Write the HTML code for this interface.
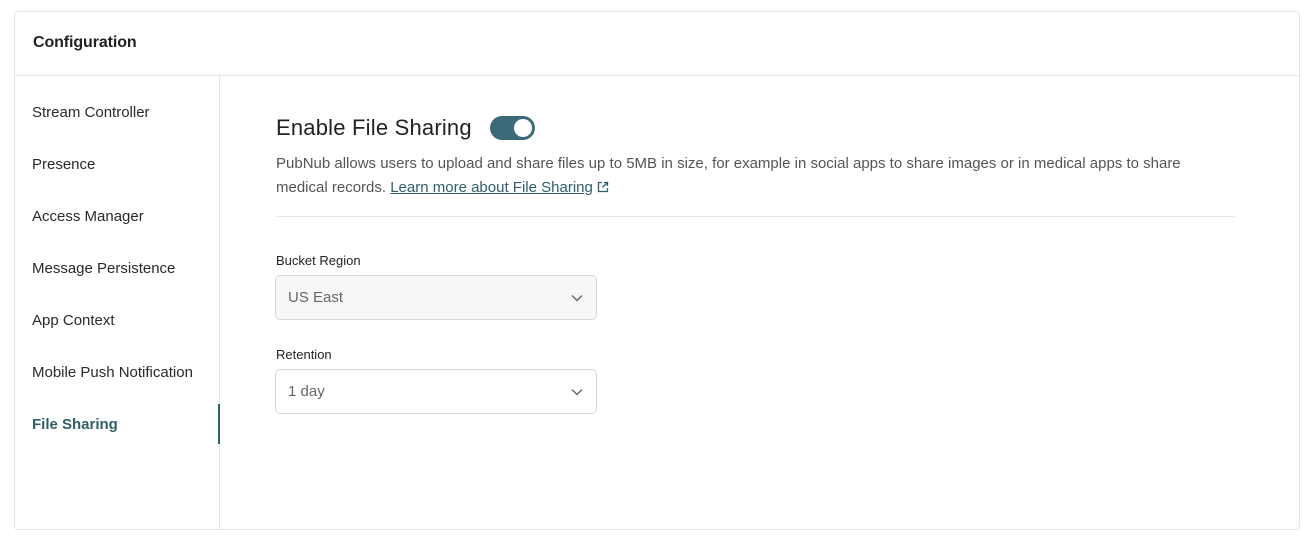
<!DOCTYPE html>
<html><head><style>
*{box-sizing:border-box;margin:0;padding:0}
body{width:1316px;height:544px;background:#fff;font-family:"Liberation Sans",sans-serif;color:#222;position:relative;overflow:hidden}
.card{position:absolute;left:14px;top:11px;width:1286px;height:519px;border:1px solid #e3e5e8;border-radius:4px}
.hdr{height:64px;border-bottom:1px solid #e3e5e8;padding:22px 0 0 18px;font-size:16px;font-weight:bold;color:#222;letter-spacing:-0.1px}
.side{position:absolute;left:0;top:64px;width:205px;bottom:0;border-right:1px solid #e3e5e8}
.side .it{position:absolute;left:17px;font-size:15px;color:#2a2a2a}
.side .act{color:#2f5e6d;font-weight:bold}
.ind{position:absolute;left:203px;top:328px;width:2px;height:40px;background:#2f5e6d}
.abs{position:absolute}
.sel{position:absolute;left:275px;width:322px;height:45px;border:1px solid #d6d8db;border-radius:5px;font-size:15px;color:#666;padding:13px 0 0 12px}
.sel svg{position:absolute;right:13px;top:18px}
</style></head><body>
<div class="card">
<div class="hdr">Configuration</div>
<div class="side">
<div class="it" style="top:28px">Stream Controller</div>
<div class="it" style="top:80px">Presence</div>
<div class="it" style="top:132px">Access Manager</div>
<div class="it" style="top:184px">Message Persistence</div>
<div class="it" style="top:236px">App Context</div>
<div class="it" style="top:288px">Mobile Push Notification</div>
<div class="it act" style="top:340px">File Sharing</div>
<div class="ind"></div>
</div>
</div>
<div class="abs" style="left:276px;top:115px;font-size:22px;color:#222;letter-spacing:0.2px">Enable File Sharing</div>
<div class="abs" style="left:490px;top:116px;width:45px;height:24px;border-radius:12px;background:#3b6b7a"><div style="position:absolute;right:3px;top:3px;width:18px;height:18px;border-radius:50%;background:#fff"></div></div>
<div class="abs" style="left:276px;top:152px;width:950px;font-size:15px;line-height:24px;color:#555">PubNub allows users to upload and share files up to 5MB in size, for example in social apps to share images or in medical apps to share medical records. <span style="color:#2f5e6d;text-decoration:underline">Learn more about File Sharing</span> <svg width="12" height="12" viewBox="0 0 12 12" style="vertical-align:-1px"><path d="M5 1.5H1.5v9h9V7M7 1.5h3.5V5M10.5 1.5 5.5 6.5" fill="none" stroke="#2f5e6d" stroke-width="1.3"/></svg></div>
<div class="abs" style="left:276px;top:216px;width:959px;height:1px;background:#e6e7e9"></div>
<div class="abs" style="left:276px;top:253px;font-size:13px;color:#222">Bucket Region</div>
<div class="sel" style="top:275px;background:#f7f7f7">US East<svg width="12" height="8" viewBox="0 0 12 8"><path d="M1 1.5l5 5 5-5" fill="none" stroke="#666" stroke-width="1.4"/></svg></div>
<div class="abs" style="left:276px;top:347px;font-size:13px;color:#222">Retention</div>
<div class="sel" style="top:369px;background:#fff">1 day<svg width="12" height="8" viewBox="0 0 12 8"><path d="M1 1.5l5 5 5-5" fill="none" stroke="#666" stroke-width="1.4"/></svg></div>
</body></html>
